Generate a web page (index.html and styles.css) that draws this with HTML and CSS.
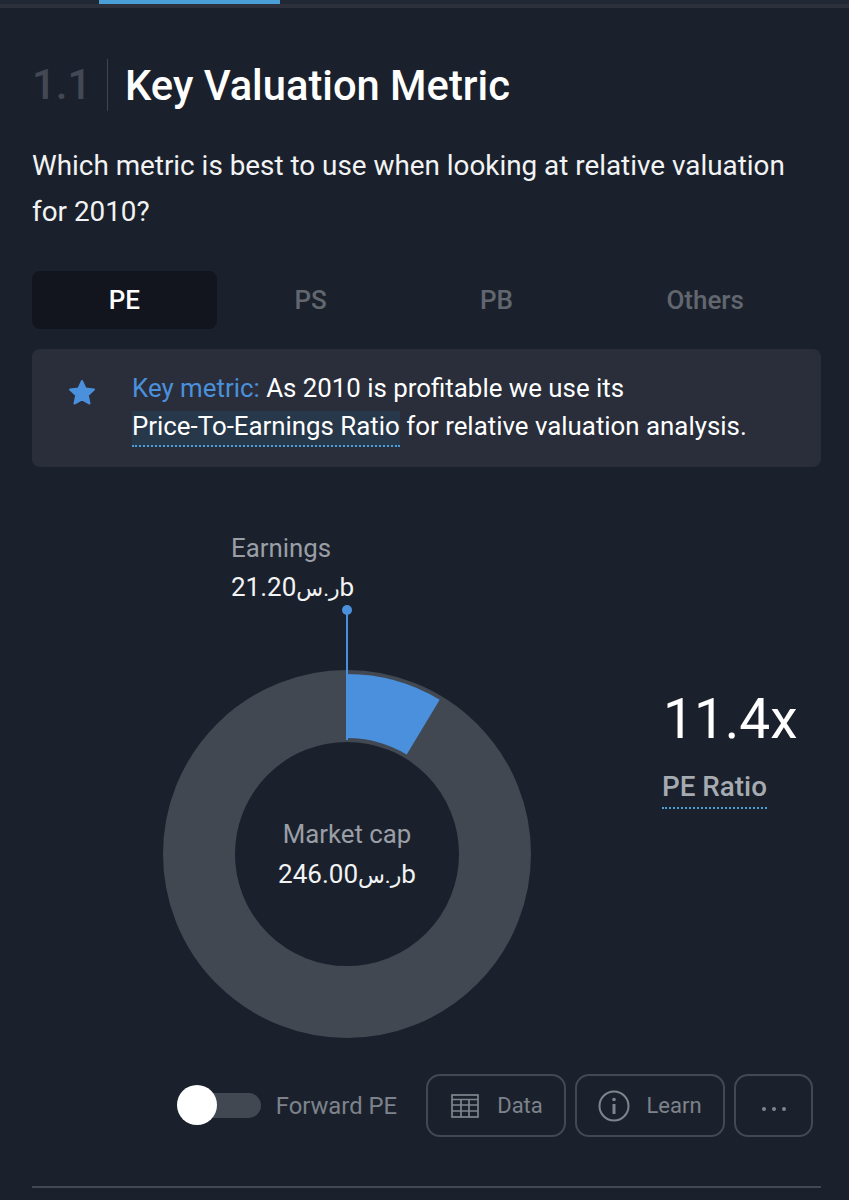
FILE: index.html
```html
<!DOCTYPE html>
<html lang="en">
<head>
    <meta charset="UTF-8">
    <meta name="viewport" content="width=device-width, initial-scale=1.0">
    <title>Key Valuation Metric</title>
    <link rel="stylesheet" href="styles.css">
</head>
<body>

    <div class="top-bar"><div class="top-tab"></div></div>

    <main class="section">
        <div class="section-head">
            <span class="section-num">1.1</span>
            <h1>Key Valuation Metric</h1>
        </div>
        <p class="question">Which metric is best to use when looking at relative valuation for 2010?</p>

        <div class="tabs">
            <div class="tab active">PE</div>
            <div class="tab">PS</div>
            <div class="tab">PB</div>
            <div class="tab others">Others</div>
        </div>

        <div class="callout">
            <svg class="star" viewBox="0 0 30 28">
                <path d="M15 3l3.6 7.6 8.400 1-6.200 5.700 1.700 8.200-7.500-4.100-7.500 4.100 1.700-8.200L3 11.600l8.400-1z"/>
            </svg>
            <p><span class="key">Key metric:</span> As 2010 is profitable we use its<br><span class="term">Price-To-Earnings Ratio</span> for relative valuation analysis.</p>
        </div>

        <div class="chart-row">
            <div class="chart">
                <svg class="donut" viewBox="0 0 598 530">
                    <circle cx="315" cy="327" r="148" fill="none" stroke="#414852" stroke-width="72"/>
                    <path d="M315 147A180 180 0 0 1 407.7 172.7L374.7 227.6A116 116 0 0 0 315 211Z" fill="#4a90dc"/>
                    <line x1="315" y1="83" x2="315" y2="213" stroke="#4a90dc" stroke-width="2"/>
                    <circle cx="315" cy="83" r="5" fill="#4a90dc"/>
                </svg>
                <div class="earnings">
                    <div class="label">Earnings</div>
                    <div class="value">21.20<span class="cur">ر.س</span>b</div>
                </div>
                <div class="market-cap">
                    <div class="label">Market cap</div>
                    <div class="value">246.00<span class="cur">ر.س</span>b</div>
                </div>
            </div>
            <div class="stat">
                <div class="stat-num">11.4x</div>
                <div class="stat-name">PE Ratio</div>
            </div>
        </div>

        <div class="actions">
            <div class="toggle">
                <div class="track"><div class="thumb"></div></div>
                <span>Forward PE</span>
            </div>
            <button class="btn btn-data">
                <svg width="28" height="24" viewBox="0 0 28 24" fill="none" stroke="#80858d" stroke-width="1.700">
                    <rect x="1" y="1" width="26" height="22"/>
                    <path d="M1 5.500h26M1 11h26M1 17h26M10 5.500v17.500M18 5.500v17.500"/>
                </svg>
                Data
            </button>
            <button class="btn btn-learn">
                <svg width="32" height="32" viewBox="0 0 32 32" fill="none" stroke="#80858d" stroke-width="2">
                    <circle cx="16" cy="16" r="14.500"/>
                    <path d="M16 14v10" stroke-width="3"/>
                    <circle cx="16" cy="9.500" r="1.800" fill="#80858d" stroke="none"/>
                </svg>
                Learn
            </button>
            <button class="btn btn-more">
                <svg class="dots" width="24" height="4" viewBox="0 0 24 4" fill="#80858d">
                    <circle cx="2" cy="2" r="2"/>
                    <circle cx="12" cy="2" r="2"/>
                    <circle cx="22" cy="2" r="2"/>
                </svg>
            </button>
        </div>

        <hr class="divider">
    </main>

</body>
</html>
```

FILE: styles.css
```css
body {
    font-family: Roboto, "DejaVu Sans", sans-serif;
    margin: 0;
    background-color: #1b212c;
    color: #fff;
    height: 1200px;
    overflow: hidden;
}
.top-bar {
    height: 4px;
    background-color: #222833;
    border-bottom: 4px solid #2b303b;
}
.top-tab {
    width: 181px;
    height: 4px;
    margin-left: 99px;
    background-color: #4a9fd8;
}
.section {
    padding: 0 28px 0 32px;
}
.section-head {
    display: flex;
    align-items: center;
    margin-top: 51px;
    height: 52px;
}
.section-num {
    width: 75px;
    height: 52px;
    line-height: 52px;
    font-size: 42px;
    font-weight: 500;
    color: #434954;
    border-right: 1px solid #3f4550;
}
h1 {
    margin: 0 0 0 17px;
    font-size: 41.7px;
    font-weight: 500;
}
.question {
    margin: 32px 0 0;
    font-size: 27.85px;
    line-height: 46px;
    color: #f2f3f4;
}
.tabs {
    display: flex;
    margin-top: 36px;
    height: 58px;
}
.tab {
    width: 186px;
    line-height: 58px;
    text-align: center;
    font-size: 26px;
    font-weight: 500;
    color: #62676f;
    border-radius: 8px;
}
.tab.active {
    width: 185px;
    margin-right: 1px;
    background-color: #12151e;
    color: #fff;
}
.tab.others {
    width: 232px;
}
.callout {
    display: flex;
    align-items: center;
    height: 118px;
    margin-top: 20px;
    background-color: #292e3a;
    border-radius: 8px;
}
.star {
    flex-shrink: 0;
    align-self: flex-start;
    width: 30px;
    height: 28px;
    margin: 29px 35px 0;
    fill: #4a90dc;
    stroke: #4a90dc;
    stroke-width: 2;
    stroke-linejoin: round;
}
.callout p {
    margin: 0 0 2px;
    font-size: 25.85px;
    line-height: 38px;
    white-space: nowrap;
}
.key {
    color: #4a90dc;
}
.term {
    background-color: #27384a;
    border-bottom: 2px dotted #4a9fd8;
    padding-bottom: 4px;
}
.chart-row {
    display: flex;
    height: 530px;
    margin-top: 60px;
}
.chart {
    position: relative;
    width: 598px;
    height: 530px;
}
.donut {
    display: block;
    width: 598px;
    height: 530px;
}
.label {
    font-size: 25.8px;
    line-height: 39px;
    color: #9a9ea6;
}
.value {
    font-size: 26px;
    line-height: 39px;
    color: #f2f3f4;
}
.market-cap .value {
    margin-top: 1px;
}
.cur {
    font-size: 22px;
}
.earnings {
    position: absolute;
    left: 199px;
    top: 2px;
}
.market-cap {
    position: absolute;
    left: 115px;
    width: 400px;
    top: 288px;
    text-align: center;
}
.stat {
    margin: 156px 0 0 32px;
}
.stat-num {
    font-size: 55px;
    line-height: 72px;
    margin-left: 1px;
}
.stat-name {
    display: inline-block;
    margin-top: 14px;
    font-size: 27.8px;
    font-weight: 500;
    line-height: 36px;
    color: #a6aab1;
    border-bottom: 2px dotted #4a9fd8;
    padding-bottom: 2px;
}
.actions {
    display: flex;
    align-items: center;
    margin-top: 17px;
    height: 63px;
}
.toggle {
    display: flex;
    align-items: center;
    flex-shrink: 0;
    width: 220px;
    margin-left: 145px;
    margin-right: 29px;
    font-size: 23.8px;
    white-space: nowrap;
    color: #7d828b;
}
.track {
    position: relative;
    width: 64px;
    height: 25px;
    margin: 0 15px 0 20px;
    background-color: #414852;
    border-radius: 13px;
}
.thumb {
    position: absolute;
    left: -20px;
    top: -8px;
    width: 40px;
    height: 40px;
    background-color: #fff;
    border-radius: 50%;
}
.btn {
    display: flex;
    flex-shrink: 0;
    align-items: center;
    justify-content: center;
    height: 63px;
    margin-right: 9px;
    padding: 0;
    background: none;
    border: 2px solid #434952;
    border-radius: 14px;
    font-family: inherit;
    font-size: 22px;
    color: #7d828b;
}
.btn-data {
    width: 140px;
    padding-left: 2px;
    gap: 18px;
}
.btn-learn {
    width: 150px;
    gap: 16px;
}
.btn-more {
    width: 79px;
    margin-right: 0;
}
.dots {
    margin-top: 6px;
}
.divider {
    height: 2px;
    margin: 49px 0 0;
    border: none;
    background-color: #434952;
}
```
